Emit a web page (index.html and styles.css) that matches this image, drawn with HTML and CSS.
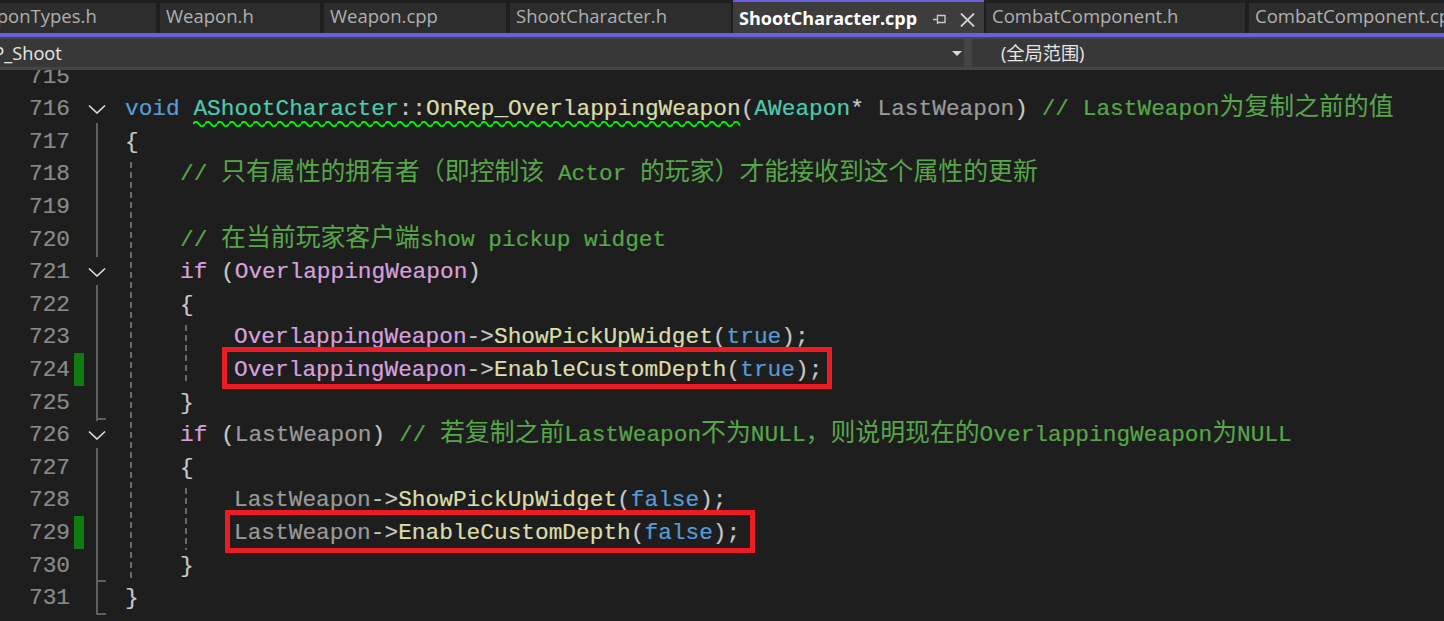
FILE: index.html
```html
<!DOCTYPE html>
<html lang="zh">
<head>
<meta charset="utf-8">
<title>ShootCharacter.cpp</title>
<link rel="stylesheet" href="styles.css">
</head>
<body>
<div class="app">
  <div class="tabs">
    <div class="tab t1">WeaponTypes.h</div>
    <div class="tab t2">Weapon.h</div>
    <div class="tab t3">Weapon.cpp</div>
    <div class="tab t4">ShootCharacter.h</div>
    <div class="tab t5 active">
      <span>ShootCharacter.cpp</span>
      <svg class="pin" width="13" height="11" viewBox="0 0 13 11"><path d="M0 5.5H4.5M4.5 1.5H12V8.5H4.5ZM4.5 .5V10" fill="none" stroke="#c8c8c8" stroke-width="1.4"/></svg>
      <svg class="close" width="15" height="14" viewBox="0 0 15 14"><path d="M1 .5L14 13.5M14 .5L1 13.5" fill="none" stroke="#d4d4d4" stroke-width="1.8"/></svg>
    </div>
    <div class="tab t6">CombatComponent.h</div>
    <div class="tab t7">CombatComponent.cpp</div>
  </div>
  <div class="nav">
    <div class="seg seg-left"><span class="seg-text">MP_Shoot</span><span class="caret"></span></div>
    <div class="seg seg-right">(全局范围)</div>
  </div>
  <div class="editor">
    <div class="lines">
      <div class="row"><span class="num">715</span><span class="mark"></span><span class="fold"></span><span class="code"></span></div>
      <div class="row"><span class="num">716</span><span class="mark"></span><span class="fold"><svg width="18" height="10" viewBox="0 0 18 10"><path d="M1 1.5L9 9L17 1.5" fill="none" stroke="#e0e0e0" stroke-width="1.6"/></svg></span><span class="code"><span class="kw">void</span> <span class="squig"><span class="ty">AShootCharacter</span><span class="p">::</span><span class="fn">OnRep_OverlappingWeapon</span><svg class="wave" height="6"><defs><pattern id="w" width="12" height="6" patternUnits="userSpaceOnUse"><path d="M0 3Q3 -1.5 6 3T12 3" fill="none" stroke="#00f000" stroke-width="2"/></pattern></defs><rect width="100%" height="6" fill="url(#w)"/></svg></span><span class="p">(</span><span class="ty">AWeapon</span><span class="p">*</span> <span class="pa">LastWeapon</span><span class="p">)</span> <span class="c">// LastWeapon<span class="z">为复制之前的值</span></span></span></div>
      <div class="row"><span class="num">717</span><span class="mark"></span><span class="fold"></span><span class="code p">{</span></div>
      <div class="row"><span class="num">718</span><span class="mark"></span><span class="fold"></span><span class="code i1 c">// <span class="z">只有属性的拥有者（即控制该</span> Actor <span class="z">的玩家）才能接收到这个属性的更新</span></span></div>
      <div class="row"><span class="num">719</span><span class="mark"></span><span class="fold"></span><span class="code"></span></div>
      <div class="row"><span class="num">720</span><span class="mark"></span><span class="fold"></span><span class="code i1 c">// <span class="z">在当前玩家客户端</span>show pickup widget</span></div>
      <div class="row"><span class="num">721</span><span class="mark"></span><span class="fold"><svg width="18" height="10" viewBox="0 0 18 10"><path d="M1 1.5L9 9L17 1.5" fill="none" stroke="#e0e0e0" stroke-width="1.6"/></svg></span><span class="code i1"><span class="m">if</span> <span class="p">(</span><span class="m">OverlappingWeapon</span><span class="p">)</span></span></div>
      <div class="row"><span class="num">722</span><span class="mark"></span><span class="fold"></span><span class="code i1 p">{</span></div>
      <div class="row"><span class="num">723</span><span class="mark"></span><span class="fold"></span><span class="code i2"><span class="m">OverlappingWeapon</span><span class="p">-&gt;</span><span class="fn">ShowPickUpWidget</span><span class="p">(</span><span class="kw">true</span><span class="p">);</span></span></div>
      <div class="row"><span class="num">724</span><span class="mark on"></span><span class="fold"></span><span class="code i2"><span class="hl hl-a"><span class="m">OverlappingWeapon</span><span class="p">-&gt;</span><span class="fn">EnableCustomDepth</span><span class="p">(</span><span class="kw">true</span><span class="p">);</span></span></span></div>
      <div class="row"><span class="num">725</span><span class="mark"></span><span class="fold"></span><span class="code i1 p">}</span></div>
      <div class="row"><span class="num">726</span><span class="mark"></span><span class="fold"><svg width="18" height="10" viewBox="0 0 18 10"><path d="M1 1.5L9 9L17 1.5" fill="none" stroke="#e0e0e0" stroke-width="1.6"/></svg></span><span class="code i1"><span class="m">if</span> <span class="p">(</span><span class="pa">LastWeapon</span><span class="p">)</span> <span class="c">// <span class="z">若复制之前</span>LastWeapon<span class="z">不为</span>NULL<span class="z">，则说明现在的</span>OverlappingWeapon<span class="z">为</span>NULL</span></span></div>
      <div class="row"><span class="num">727</span><span class="mark"></span><span class="fold"></span><span class="code i1 p">{</span></div>
      <div class="row"><span class="num">728</span><span class="mark"></span><span class="fold"></span><span class="code i2"><span class="pa">LastWeapon</span><span class="p">-&gt;</span><span class="fn">ShowPickUpWidget</span><span class="p">(</span><span class="kw">false</span><span class="p">);</span></span></div>
      <div class="row"><span class="num">729</span><span class="mark on"></span><span class="fold"></span><span class="code i2"><span class="hl hl-b"><span class="pa">LastWeapon</span><span class="p">-&gt;</span><span class="fn">EnableCustomDepth</span><span class="p">(</span><span class="kw">false</span><span class="p">);</span></span></span></div>
      <div class="row"><span class="num">730</span><span class="mark"></span><span class="fold"></span><span class="code i1 p">}</span></div>
      <div class="row"><span class="num">731</span><span class="mark"></span><span class="fold"></span><span class="code p">}</span></div>
    </div>
    <i class="fl fl1"></i>
    <i class="fl fl2"></i>
    <i class="fl fl3"></i>
    <i class="tick tk1"></i>
    <i class="tick tk2"></i>
    <i class="tick tk3"></i>
    <i class="guide g1"></i>
    <i class="guide g2"></i>
    <i class="guide g3"></i>
  </div>
</div>
</body>
</html>
```
FILE: styles.css
```css
*, *::after { box-sizing: border-box; }
html, body { margin: 0; padding: 0; height: 100%; background: #1e1e1e; overflow: hidden; }
.app { display: flex; flex-direction: column; width: 1444px; height: 621px; overflow: hidden; }

.tabs {
  display: flex;
  flex: none;
  gap: 4px;
  height: 37px;
  padding-top: 3px;
  background: #1f1f1f;
  border-bottom: 4px solid #6a5fe0;
  font-family: "Open Sans", "Noto Sans", sans-serif;
  font-size: 18.5px;
  color: #b0b0b0;
  overflow: hidden;
}
.tab {
  flex: none;
  height: 30px;
  padding-left: 6px;
  line-height: 25px;
  background: #2d2d2d;
  white-space: nowrap;
  overflow: hidden;
}
.t1 { margin-left: -47px; width: 203px; }
.t2 { width: 160px; }
.t3 { width: 182px; }
.t4 { width: 221px; }
.t5 { width: 251px; margin-left: -2px; }
.t6 { width: 259px; margin-left: -2px; }
.t7 { width: 260px; }
.active {
  display: flex;
  align-items: center;
  height: 33px;
  margin-top: -3px;
  background: #3d3d3d;
  border-top: 2px solid #6a5fe0;
  color: #fff;
  font-size: 18px;
  font-weight: 700;
  line-height: 30px;
}
.pin { margin-left: auto; margin-top: 3px; }
.close { margin: 4px 9px 0 14px; }

.nav {
  display: flex;
  flex: none;
  gap: 8px;
  height: 33px;
  padding: 2px 0 3px;
  background: #454545;
  font-family: "Open Sans", "Noto Sans", "Noto Sans CJK SC", sans-serif;
  font-size: 18.2px;
  color: #e6e6e6;
}
.seg { display: flex; align-items: center; background: #383838; overflow: hidden; white-space: nowrap; padding-bottom: 2px; }
.seg-left { width: 964px; padding-bottom: 0; }
.seg-right { flex: 1; padding-left: 29px; }
.seg-text { margin-left: -23px; }
.caret {
  width: 0; height: 0;
  margin-left: auto;
  margin-right: 2px;
  border: 5px solid transparent;
  border-top: 5px solid #d8d8d8;
  border-bottom: 0;
}

.editor {
  position: relative;
  flex: 1;
  overflow: hidden;
  background: #1e1e1e;
  font-family: "Liberation Mono", "Noto Sans CJK SC", monospace;
  font-size: 22.8px;
  -webkit-text-stroke: 0.2px;
}
.lines { margin-top: -10.3px; }
.row { display: flex; height: 32.6px; line-height: 35.6px; }
.num { width: 70px; flex: none; text-align: right; color: #8a8a8a; }
.mark { width: 10px; flex: none; margin: 0 0 0 4px; }
.mark.on { background: #107c10; }
.fold { width: 26px; flex: none; display: flex; align-items: center; justify-content: center; padding-top: 1px; }
.code { flex: 1; padding-left: 15px; white-space: pre; color: #dcdcdc; }
.i1 { padding-left: 70px; }
.i2 { padding-left: 124px; }

.z { font-family: "Noto Sans CJK SC", sans-serif; font-size: 24.87px; line-height: 0; -webkit-text-stroke: 0; }
.kw { color: #569cd6; }
.ty { color: #4ec9b0; }
.fn { color: #dcdcaa; }
.p { color: #c8c8c8; }
.pa { color: #9a9a9a; }
.m { color: #d8a0df; }
.c { color: #57a64a; }

.squig { position: relative; }
.wave { position: absolute; left: 0; bottom: -5px; width: 100%; }

.hl { position: relative; }
.hl::after { content: ""; position: absolute; border: 5px solid #ed1c24; }
.hl-a::after { left: -12px; right: -10px; top: -10.5px; height: 42px; }
.hl-b::after { left: -9px; right: -15px; top: -10.5px; height: 43px; }

.fl, .tick, .guide { position: absolute; display: block; }
.fl { left: 96px; width: 2px; background: #5f5f5f; }
.fl1 { top: 53px; height: 134px; }
.fl2 { top: 215px; height: 136px; }
.fl3 { top: 378px; height: 167px; }
.tick { left: 96px; width: 10px; height: 2px; background: #5f5f5f; }
.tk1 { top: 348px; }
.tk2 { top: 510px; }
.tk3 { top: 543px; }
.guide { width: 2px; background: repeating-linear-gradient(to bottom, #6a6a6a 0 6px, transparent 6px 10px); }
.g1 { left: 130px; top: 92px; height: 418px; }
.g2 { left: 185px; top: 255px; height: 60px; }
.g3 { left: 185px; top: 418px; height: 62px; }
```
